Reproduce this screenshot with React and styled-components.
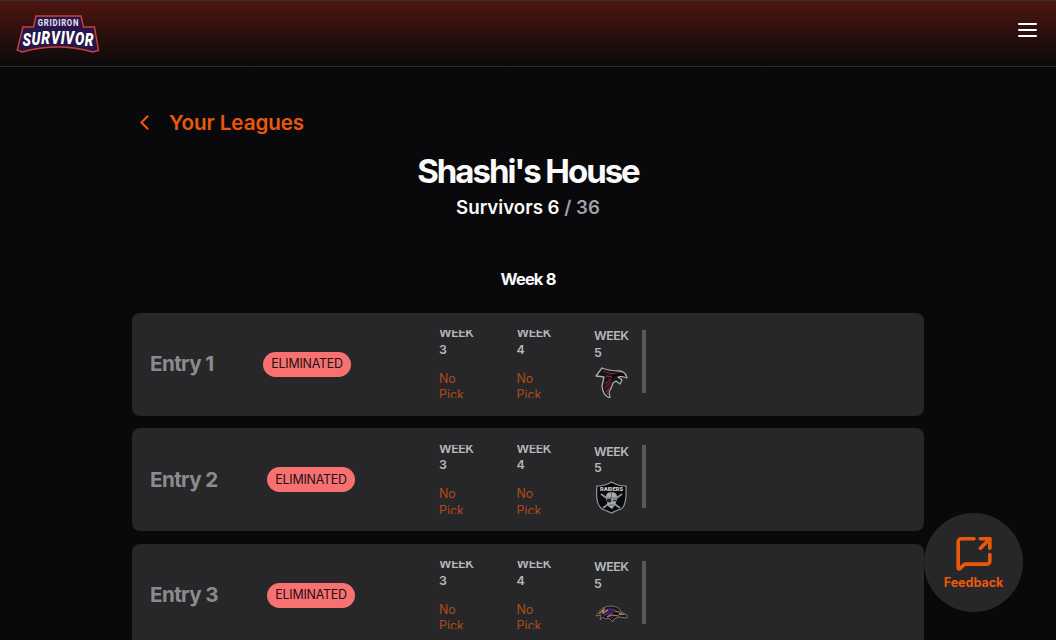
import React from 'react';
import styled, { createGlobalStyle } from 'styled-components';
import { ChevronLeft, MessageSquareShare } from 'lucide-react';

const GlobalStyle = createGlobalStyle`
  * { box-sizing: border-box; }
  html, body { margin: 0; height: 640px; overflow: hidden; background: #09090b; }
  body { font-family: Inter, "Liberation Sans", sans-serif; color: #fafafa; }
  h1, h2, h3, p { margin: 0; }
`;

const Page = styled.div`
  height: 640px;
  overflow: hidden;
`;

const Header = styled.header`
  display: flex;
  align-items: center;
  justify-content: space-between;
  height: 67px;
  padding: 0 19.5px 0 16px;
  border-top: 1px solid #303033;
  border-bottom: 1px solid #2c2c2f;
  background: linear-gradient(to bottom, #4f1510, #09090b);
`;

const MenuButton = styled.button`
  display: flex;
  flex-direction: column;
  gap: 4.4px;
  width: 19px;
  margin-top: -7px;
  padding: 0;
  border: 0;
  background: none;
`;

const MenuBar = styled.span`
  height: 2px;
  border-radius: 1px;
  background: #fff;
`;

const Main = styled.main`
  width: 792px;
  margin: 0 auto;
  padding-top: 44px;
`;

const BackLink = styled.a`
  display: flex;
  align-items: center;
  height: 24px;
  gap: 12px;
  color: #ea580c;
  font-size: 20.6px;
  line-height: 24px;
  font-weight: 600;
  letter-spacing: -0.08px;
  svg { margin-top: -1px; }
`;

const Heading = styled.section`
  display: flex;
  flex-direction: column;
  align-items: center;
`;

const Title = styled.h1`
  margin-top: 17px;
  font-size: 33px;
  line-height: 38px;
  font-weight: 700;
  letter-spacing: -2.05px;
`;

const Survivors = styled.p`
  margin-top: 5px;
  font-size: 18.7px;
  line-height: 26px;
  font-weight: 600;
  span { color: #a1a1aa; }
`;

const WeekTitle = styled.h2`
  margin-top: 46px;
  font-size: 16.5px;
  line-height: 24px;
  font-weight: 700;
  letter-spacing: -0.85px;
`;

const Entries = styled.section`
  display: flex;
  flex-direction: column;
  gap: 12.5px;
  margin-top: 21.8px;
`;

const Card = styled.article`
  display: grid;
  grid-template-columns: 289px 202.5px 1fr;
  height: 103px;
  padding: 17px 18px;
  border-radius: 8px;
  background: #27272a;
`;

const Identity = styled.div`
  display: flex;
  align-items: center;
  gap: 49px;
`;

const EntryName = styled.h3`
  color: #8b8b8d;
  font-size: 20.6px;
  line-height: 28px;
  font-weight: 700;
  letter-spacing: -0.6px;
  width: ${(p) => p.$width}px;
  white-space: nowrap;
`;

const Badge = styled.span`
  display: flex;
  align-items: center;
  justify-content: center;
  width: 88px;
  height: 25px;
  border-radius: 13px;
  background: #f87171;
  color: #1c1012;
  font-size: 12.4px;
  line-height: 16px;
  letter-spacing: -0.2px;
`;

const Picks = styled.div`
  display: flex;
  height: 68.5px;
  gap: 42.5px;
  overflow: hidden;
`;

const Pick = styled.div`
  display: flex;
  flex-direction: column;
  flex: none;
  width: 35px;
  margin-top: ${(p) => (p.$clipped ? '-4.5px' : '-1.6px')};
`;

const PickWeek = styled.span`
  color: #b8b8ba;
  font-size: 12.4px;
  line-height: 16.5px;
  font-weight: 600;
  letter-spacing: -0.5px;
`;

const NoPick = styled.span`
  margin-top: 12.5px;
  width: 30px;
  color: #b04a15;
  font-size: 12.4px;
  line-height: 16.5px;
`;

const TeamMark = styled.svg`
  flex: none;
  width: 33px;
  height: 33px;
  margin-top: 4.5px;
  margin-left: 0.5px;
`;

const ScrollTrack = styled.div`
  width: 4.5px;
  height: 63px;
  background: #59595b;
`;

const Scroller = styled.div`
  display: flex;
`;

const Feedback = styled.button`
  position: fixed;
  right: 33px;
  bottom: 28px;
  display: flex;
  flex-direction: column;
  align-items: center;
  width: 99px;
  height: 99px;
  padding: 21px 0 0;
  border: 0;
  border-radius: 50%;
  background: #27272a;
  color: #ea580c;
  font: 700 12.5px/17px Inter, "Liberation Sans", sans-serif;
  svg { margin-bottom: 2px; }
`;

function Logo() {
  return (
    <svg width="84" height="40" viewBox="0 0 84 40" aria-label="Gridiron Survivor">
      <path
        d="M20 2H65L67.500 13H78.500L82.500 36.500L77 38Q42 28 6 38L1.200 36L7 13H17.500Z"
        fill="#27164a"
        stroke="#c94335"
        strokeWidth="1.4"
      />
      <g transform="translate(21.800 12.400) scale(.82 1)">
        <text textLength="49.500" fill="#e3dced" fontFamily="Roboto" fontSize="9.500" fontWeight="800">GRIDIRON</text>
      </g>
      <g transform="translate(6.500 31.500) scale(.75 1)">
        <text x="0 12 25 38 51 57 70 83" y="0 -.6 -1.2 -1.600 -1.600 -1.200 -.6 0" fill="#fff" fontFamily="Roboto" fontSize="18.500" fontWeight="900" fontStyle="italic">SURVIVOR</text>
      </g>
    </svg>
  );
}

function Falcon() {
  return (
    <TeamMark viewBox="0 0 33 33">
      <path d="M1 10L7 2Q14 5 25 5Q31 6 32 12L29 11Q26 10 23 11L27 14L25 18L21 15L18 17Q16 23 14 26L15 32Q8 30 7 20L9 11Z" fill="#17171a" stroke="#a9abae" strokeWidth="1.300" strokeLinejoin="round" />
      <path d="M8 5Q16 9 25 7M11 10L17 11M16 13L10 18M16 16L10 22M16 20L11 26M14 24L12 29" fill="none" stroke="#7b2132" strokeWidth="1.300" />
      <path d="M17 11Q22 7 29 9" stroke="#09090b" strokeWidth="2.500" fill="none" />
    </TeamMark>
  );
}

function Raider() {
  return (
    <TeamMark viewBox="0 0 33 33">
      <path d="M2 5Q10 5 16.500 1Q23 5 31 5Q32 25 26 28Q20 30 16.500 32Q12 30 7 28Q0 23 2 5Z" fill="#08090a" stroke="#96999c" strokeWidth="1.200" />
      <text x="5" y="9.500" textLength="23" lengthAdjust="spacingAndGlyphs" fill="#d3d5d6" fontFamily="Roboto" fontSize="4.800" fontWeight="900">RAIDERS</text>
      <path d="M6 13L25 27M27 13L8 27" stroke="#8d9294" strokeWidth="1.800" />
      <path d="M11 18Q10 11 16.500 11Q23 11 22 18L20 24L17 28L13 25Z" fill="#a7abad" />
      <path d="M11 17H22M16.500 11V17" stroke="#62676a" />
      <path d="M12 18H16V21H12ZM18 19H21V20H18ZM14 24H19" fill="#161819" stroke="#393d3f" strokeWidth=".7" />
    </TeamMark>
  );
}

function Raven() {
  return (
    <TeamMark viewBox="0 0 33 33">
      <path d="M1 19Q6 9 16 9Q24 9 26 15L32 18V21L24 20L19 22L18 25L14 21L10 22L8 20L5 23L6 18Z" fill="#17131f" stroke="#94826c" strokeWidth=".8" />
      <path d="M7 15Q12 10 20 13L17 17L9 18ZM13 18L18 21" fill="#34205f" stroke="#4e3a73" />
      <path d="M4 17L9 12L8 16L13 13M12 20L16 18L24 19M20 14L24 15" stroke="#b18c50" strokeWidth="1.200" fill="none" />
      <path d="M24 15L31 18L24 18Z" fill="#858287" />
    </TeamMark>
  );
}

const entries = [
  { name: 'Entry 1', nameWidth: 64, Mark: Falcon },
  { name: 'Entry 2', nameWidth: 68, Mark: Raider },
  { name: 'Entry 3', nameWidth: 68, Mark: Raven },
];

function EntryCard({ name, nameWidth, Mark }) {
  return (
    <Card>
      <Identity>
        <EntryName $width={nameWidth}>{name}</EntryName>
        <Badge>ELIMINATED</Badge>
      </Identity>
      <Picks>
        {[3, 4].map((week) => (
          <Pick key={week} $clipped>
            <PickWeek>WEEK<br />{week}</PickWeek>
            <NoPick>No Pick</NoPick>
          </Pick>
        ))}
        <Pick>
          <PickWeek>WEEK<br />5</PickWeek>
          <Mark />
        </Pick>
      </Picks>
      <Scroller><ScrollTrack /></Scroller>
    </Card>
  );
}

export default function App() {
  return (
    <Page>
      <GlobalStyle />
      <Header>
        <Logo />
        <MenuButton aria-label="Menu"><MenuBar /><MenuBar /><MenuBar /></MenuButton>
      </Header>
      <Main>
        <BackLink><ChevronLeft size={25} strokeWidth={2} /><span>Your Leagues</span></BackLink>
        <Heading>
          <Title>Shashi's House</Title>
          <Survivors>Survivors 6 <span>/ 36</span></Survivors>
          <WeekTitle>Week 8</WeekTitle>
        </Heading>
        <Entries>
          {entries.map((entry) => <EntryCard key={entry.name} {...entry} />)}
        </Entries>
      </Main>
      <Feedback><MessageSquareShare size={38} strokeWidth={2.3} />Feedback</Feedback>
    </Page>
  );
}
